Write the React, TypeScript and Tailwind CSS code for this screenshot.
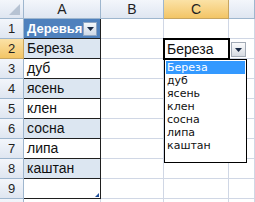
import React from "react";

const data = ["Береза", "дуб", "ясень", "клен", "сосна", "липа", "каштан", ""];
const listItems = ["Береза", "дуб", "ясень", "клен", "сосна", "липа", "каштан"];

function Arrow() {
  return (
    <svg width="7" height="4" viewBox="0 0 7 4">
      <path d="M0 0h7L3.5 4z" fill="#1b2b45" />
    </svg>
  );
}

export default function App() {
  const hdr = "flex items-center justify-center border-r border-b border-[#9eb6ce] bg-gradient-to-b from-[#f3f6fb] to-[#dfe6f1] text-[#1f1f1f]";
  const hdrSel = "flex items-center justify-center border-r border-b border-[#c7a560] bg-gradient-to-b from-[#fbe2a6] to-[#f3c565] text-[#1f1f1f]";
  const grid = "border-r border-b border-[#d0d7e5] bg-white";
  return (
    <div
      className="relative w-[255px] h-[202px] overflow-hidden bg-white text-[14px]"
      style={{ fontFamily: '"Liberation Sans", Arial, sans-serif' }}
    >
      <div className="grid grid-cols-[24px_77px_63px_65px_26px] grid-rows-[19px_repeat(10,20px)]">
        {/* header row */}
        <div className="relative border-r border-b border-[#9eb6ce] bg-gradient-to-b from-[#f3f6fb] to-[#dfe6f1]">
          <svg className="absolute right-[3px] bottom-[3px]" width="11" height="11" viewBox="0 0 11 11">
            <path d="M11 0V11H0z" fill="#b7c3d3" />
          </svg>
        </div>
        <div className={hdr}>A</div>
        <div className={hdr}>B</div>
        <div className={hdrSel}>C</div>
        <div className={hdr}></div>

        {/* row 1 */}
        <div className={hdr + " text-[13px]"}>1</div>
        <div className="flex items-center justify-between pl-[3px] pr-[3px] border-r border-b border-[#1f1f1f] bg-[#4f81bd] text-white font-bold text-[13px]">
          <span>Деревья</span>
          <div className="flex items-center justify-center w-[14px] h-[14px] border border-[#8fa6c4] bg-gradient-to-b from-[#f4f7fb] to-[#cfd9e7]">
            <Arrow />
          </div>
        </div>
        <div className={grid}></div>
        <div className={grid}></div>
        <div className={grid}></div>

        {data.map((v, i) => {
          const n = i + 2;
          const blue = i % 2 === 0 && v !== "";
          return (
            <React.Fragment key={n}>
              <div className={(n === 2 ? hdrSel : hdr) + " text-[13px]"}>{n}</div>
              <div
                className={
                  "relative flex items-center pl-[3px] border-r border-b border-[#1f1f1f] text-[#111] " +
                  (blue ? "bg-[#dce6f1]" : "bg-white")
                }
              >
                {v}
                {v === "" && (
                  <svg className="absolute right-[1px] bottom-[1px]" width="4" height="4" viewBox="0 0 4 4">
                    <path d="M4 0V4H0z" fill="#1f4e9a" />
                  </svg>
                )}
              </div>
              <div className={grid}></div>
              <div className={grid}></div>
              <div className={grid}></div>
            </React.Fragment>
          );
        })}

        <div className={hdr}></div>
        <div className={grid}></div>
        <div className={grid}></div>
        <div className={grid}></div>
        <div className={grid}></div>
      </div>

      {/* active cell editor */}
      <div className="absolute left-[163px] top-[38px] w-[67px] h-[22px] border-2 border-black bg-white flex items-center pl-[2px] text-[#111]">
        Береза
      </div>
      {/* dropdown button */}
      <div className="absolute left-[231px] top-[42px] w-[15px] h-[15px] flex items-center justify-center border border-[#a3abb6] bg-gradient-to-b from-[#fbfbfc] to-[#d6dbe2]">
        <Arrow />
      </div>
      {/* list */}
      <div
        className="absolute left-[164px] top-[59px] w-[83px] h-[104px] border border-black bg-white p-[1px] leading-[13px] text-[#111]"
        style={{ fontFamily: '"DejaVu Sans", Tahoma, sans-serif', fontSize: "11px" }}
      >
        {listItems.map((it, i) => (
          <div key={it} className={"h-[13px] pl-[1px] " + (i === 0 ? "bg-[#3399ff] text-white" : "")}>
            {it}
          </div>
        ))}
      </div>
    </div>
  );
}
